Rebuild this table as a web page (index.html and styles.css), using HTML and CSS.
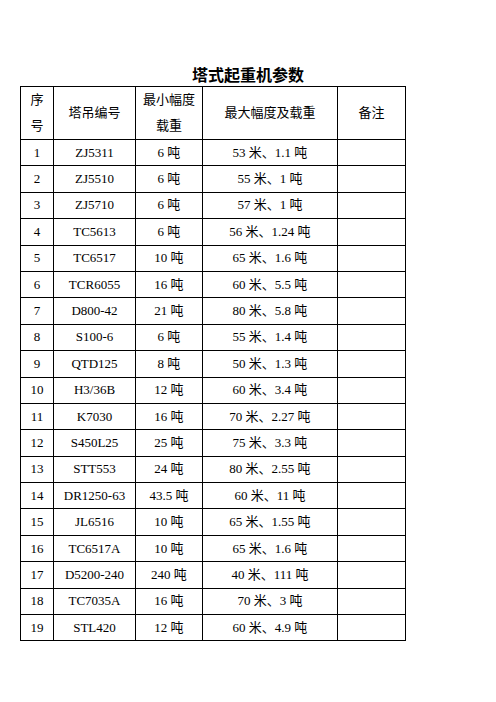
FILE: index.html
```html
<!DOCTYPE html>
<html lang="zh">
<head>
<meta charset="utf-8">
<title>塔式起重机参数</title>
<link rel="stylesheet" href="styles.css">
</head>
<body>
<div class="page">
  <h1 class="title">塔式起重机参数</h1>
  <table class="params">
    <colgroup>
      <col class="c-no">
      <col class="c-code">
      <col class="c-min">
      <col class="c-max">
      <col class="c-note">
    </colgroup>
    <thead>
      <tr class="head">
        <th>序<br>号</th>
        <th>塔吊编号</th>
        <th>最小幅度<br>载重</th>
        <th>最大幅度及载重</th>
        <th>备注</th>
      </tr>
    </thead>
    <tbody>
      <tr><td>1</td><td>ZJ5311</td><td>6 吨</td><td>53 米、1.1 吨</td><td></td></tr>
      <tr><td>2</td><td>ZJ5510</td><td>6 吨</td><td>55 米、1 吨</td><td></td></tr>
      <tr><td>3</td><td>ZJ5710</td><td>6 吨</td><td>57 米、1 吨</td><td></td></tr>
      <tr><td>4</td><td>TC5613</td><td>6 吨</td><td>56 米、1.24 吨</td><td></td></tr>
      <tr><td>5</td><td>TC6517</td><td>10 吨</td><td>65 米、1.6 吨</td><td></td></tr>
      <tr><td>6</td><td>TCR6055</td><td>16 吨</td><td>60 米、5.5 吨</td><td></td></tr>
      <tr><td>7</td><td>D800-42</td><td>21 吨</td><td>80 米、5.8 吨</td><td></td></tr>
      <tr><td>8</td><td>S100-6</td><td>6 吨</td><td>55 米、1.4 吨</td><td></td></tr>
      <tr><td>9</td><td>QTD125</td><td>8 吨</td><td>50 米、1.3 吨</td><td></td></tr>
      <tr><td>10</td><td>H3/36B</td><td>12 吨</td><td>60 米、3.4 吨</td><td></td></tr>
      <tr><td>11</td><td>K7030</td><td>16 吨</td><td>70 米、2.27 吨</td><td></td></tr>
      <tr><td>12</td><td>S450L25</td><td>25 吨</td><td>75 米、3.3 吨</td><td></td></tr>
      <tr><td>13</td><td>STT553</td><td>24 吨</td><td>80 米、2.55 吨</td><td></td></tr>
      <tr><td>14</td><td>DR1250-63</td><td>43.5 吨</td><td>60 米、11 吨</td><td></td></tr>
      <tr><td>15</td><td>JL6516</td><td>10 吨</td><td>65 米、1.55 吨</td><td></td></tr>
      <tr><td>16</td><td>TC6517A</td><td>10 吨</td><td>65 米、1.6 吨</td><td></td></tr>
      <tr><td>17</td><td>D5200-240</td><td>240 吨</td><td>40 米、111 吨</td><td></td></tr>
      <tr><td>18</td><td>TC7035A</td><td>16 吨</td><td>70 米、3 吨</td><td></td></tr>
      <tr><td>19</td><td>STL420</td><td>12 吨</td><td>60 米、4.9 吨</td><td></td></tr>
    </tbody>
  </table>
</div>
</body>
</html>
```

FILE: styles.css
```css
html, body {
  margin: 0;
  padding: 0;
  background: #ffffff;
}

.page {
  padding-top: 64px;
  font-family: "Liberation Serif", "Noto Sans CJK SC", serif;
  color: #000000;
}

.title {
  margin: 0 0 2px 0;
  font-family: "Noto Sans CJK SC", sans-serif;
  font-size: 16px;
  line-height: 20px;
  font-weight: 700;
  text-align: center;
}

.params {
  margin-left: 20px;
  border-collapse: collapse;
  table-layout: fixed;
  width: 385px;
  font-size: 13px;
}

.c-no { width: 33px; }
.c-code { width: 82px; }
.c-min { width: 67px; }
.c-max { width: 135px; }
.c-note { width: 68px; }

.params th,
.params td {
  border: 1px solid #000000;
  padding: 0;
  text-align: center;
  vertical-align: middle;
  font-weight: 400;
}

.params th {
  height: 51px;
  line-height: 26px;
}

.params td {
  height: 25.4px;
  line-height: 18px;
}
```
